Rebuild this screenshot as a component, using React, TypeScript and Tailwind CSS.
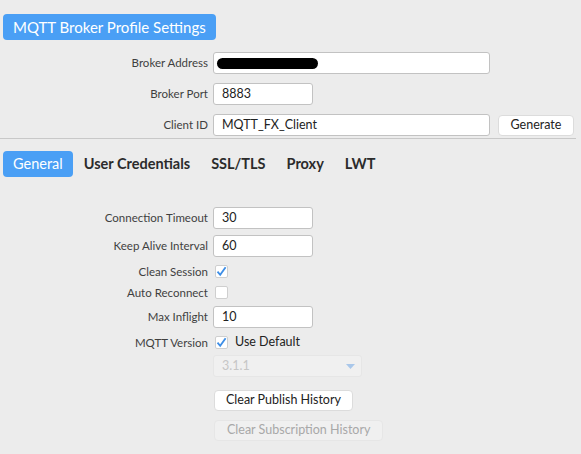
import React from 'react';

const font = { fontFamily: 'Lato, "Open Sans", sans-serif' };

function Label({ children }: { children: React.ReactNode }) {
  return (
    <div className="text-right text-[11.5px] leading-none text-[#3f3f3f] pr-[5px]">
      {children}
    </div>
  );
}

function TextInput({ value, width, children }: { value?: string; width: string; children?: React.ReactNode }) {
  return (
    <div
      className={`flex h-[22px] items-center rounded-[3px] border border-[#c2c2c2] bg-white pl-[8px] text-[12.5px] text-[#222] ${width}`}
    >
      {value}
      {children}
    </div>
  );
}

function Check({ checked }: { checked: boolean }) {
  return (
    <div className="flex h-[13px] w-[13px] items-center justify-center rounded-[2px] border border-[#cfcfcf] bg-white">
      {checked && (
        <svg width="11" height="11" viewBox="0 0 11 11">
          <path d="M1.5 5.6 L4.2 8.8 L9.6 1.2" fill="none" stroke="#3d8ee6" strokeWidth="1.8" />
        </svg>
      )}
    </div>
  );
}

export default function App() {
  const tabs = ['General', 'User Credentials', 'SSL/TLS', 'Proxy', 'LWT'];

  return (
    <div className="h-[454px] w-[581px] overflow-hidden bg-[#ececec]" style={font}>
      <div className="flex pl-[3px] pt-[14px]">
        <div className="flex h-[26px] items-center rounded-[4px] bg-[#4a9ff5] px-[10px] text-[15px] text-white">
          MQTT Broker Profile Settings
        </div>
      </div>

      <div className="mt-[12px] grid grid-cols-[213px_auto] items-center gap-y-[9px]">
        <Label>Broker Address</Label>
        <TextInput width="w-[277px]">
          <div className="ml-[-5px] h-[11px] w-[101px] rounded-full bg-black" />
        </TextInput>
        <Label>Broker Port</Label>
        <TextInput value="8883" width="w-[100px]" />
        <Label>Client ID</Label>
        <div className="flex items-center gap-[8px]">
          <TextInput value="MQTT_FX_Client" width="w-[277px]" />
          <div className="flex h-[21px] w-[76px] items-center justify-center rounded-[4px] border border-[#dcdcdc] bg-white text-[12.5px] text-[#222]">
            Generate
          </div>
        </div>
      </div>

      <div className="mt-[2px] h-px w-[576px] bg-[#c8c8c8]" />

      <div className="ml-[3px] mt-[12px] flex items-center gap-[1px]">
        {tabs.map((t, i) => (
          <div
            key={t}
            className={`flex h-[26px] items-center rounded-[4px] px-[10px] text-[14.5px] font-bold ${
              i === 0 ? 'bg-[#4a9ff5] font-normal text-white' : 'text-[#2b2b2b]'
            }`}
          >
            {t}
          </div>
        ))}
      </div>

      <div className="mt-[30px] grid grid-cols-[213px_auto] items-center">
        <Label>Connection Timeout</Label>
        <TextInput value="30" width="w-[100px]" />

        <div className="col-span-2 h-[6px]" />
        <Label>Keep Alive Interval</Label>
        <TextInput value="60" width="w-[100px]" />

        <div className="col-span-2 h-[8px]" />
        <Label>Clean Session</Label>
        <div className="pl-[2px]">
          <Check checked />
        </div>

        <div className="col-span-2 h-[8px]" />
        <Label>Auto Reconnect</Label>
        <div className="pl-[2px]">
          <Check checked={false} />
        </div>

        <div className="col-span-2 h-[7px]" />
        <Label>Max Inflight</Label>
        <TextInput value="10" width="w-[100px]" />

        <div className="col-span-2 h-[8px]" />
        <Label>MQTT Version</Label>
        <div className="flex items-center gap-[7px] pl-[2px]">
          <Check checked />
          <span className="text-[12.5px] leading-none text-[#222]">Use Default</span>
        </div>

        <div className="col-span-2 h-[6px]" />
        <div />
        <div className="flex h-[22px] w-[149px] items-center justify-between rounded-[3px] border border-[#e6e6e6] bg-[#f0f0f0] pl-[8px] pr-[6px] text-[12.5px] text-[#c6c6c6]">
          3.1.1
          <svg width="9" height="5" viewBox="0 0 9 5">
            <path d="M0 0 H9 L4.5 5 Z" fill="#a9c7ea" />
          </svg>
        </div>

        <div className="col-span-2 h-[13px]" />
        <div />
        <div className="flex pl-[1px]">
          <div className="flex h-[21px] items-center rounded-[4px] border border-[#dcdcdc] bg-white px-[11px] text-[12.5px] text-[#222]">
            Clear Publish History
          </div>
        </div>

        <div className="col-span-2 h-[9px]" />
        <div />
        <div className="flex pl-[1px]">
          <div className="flex h-[21px] items-center rounded-[4px] border border-[#e6e6e6] bg-[#f0f0f0] px-[12px] text-[12.5px] text-[#a8a8a8]">
            Clear Subscription History
          </div>
        </div>
      </div>
    </div>
  );
}
